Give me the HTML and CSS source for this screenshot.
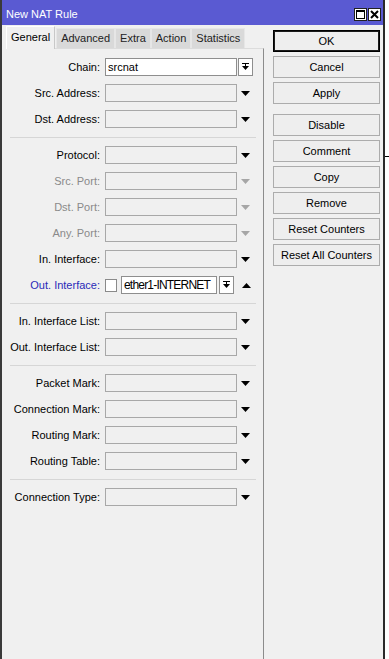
FILE: index.html
```html
<!DOCTYPE html>
<html lang="en">
<head>
  <meta charset="UTF-8" />
  <title>New NAT Rule</title>
  <link rel="stylesheet" href="styles.css">
</head>
<body>
<div class="screen">
  <div class="window">
    <div class="titlebar">
      <span class="title">New NAT Rule</span>
      <div class="title-btns">
        <span class="tbtn">
          <svg width="9" height="9" viewBox="0 0 9 9"><rect x="0.5" y="0.5" width="8" height="8" fill="none" stroke="#000"/><rect x="0" y="0" width="9" height="2" fill="#000"/></svg>
        </span>
        <span class="tbtn">
          <svg width="9" height="9" viewBox="0 0 9 9"><path d="M1 1 L8 8 M8 1 L1 8" stroke="#000" stroke-width="2"/></svg>
        </span>
      </div>
    </div>

    <div class="content">
      <div class="left">
        <div class="tabs">
          <div class="tab active">General</div>
          <div class="tab">Advanced</div>
          <div class="tab">Extra</div>
          <div class="tab">Action</div>
          <div class="tab">Statistics</div>
        </div>

        <div class="panel">
          <div class="row">
            <span class="label">Chain:</span>
            <span class="field white narrow">srcnat</span>
            <span class="dd-btn">
              <svg width="7" height="8" viewBox="0 0 7 8"><rect x="0" y="0" width="7" height="1" fill="#000"/><rect x="3" y="1" width="1" height="3" fill="#000"/><polygon points="0,3 7,3 3.5,7" fill="#000"/></svg>
            </span>
          </div>
          <div class="row">
            <span class="label">Src. Address:</span>
            <span class="field"></span>
            <span class="arrow"><svg width="9" height="5" viewBox="0 0 9 5"><polygon points="0,0 9,0 4.5,5" fill="#000"/></svg></span>
          </div>
          <div class="row">
            <span class="label">Dst. Address:</span>
            <span class="field"></span>
            <span class="arrow"><svg width="9" height="5" viewBox="0 0 9 5"><polygon points="0,0 9,0 4.5,5" fill="#000"/></svg></span>
          </div>

          <div class="sep"></div>

          <div class="row">
            <span class="label">Protocol:</span>
            <span class="field"></span>
            <span class="arrow"><svg width="9" height="5" viewBox="0 0 9 5"><polygon points="0,0 9,0 4.5,5" fill="#000"/></svg></span>
          </div>
          <div class="row">
            <span class="label disabled">Src. Port:</span>
            <span class="field"></span>
            <span class="arrow"><svg width="9" height="5" viewBox="0 0 9 5"><polygon points="0,0 9,0 4.5,5" fill="#a6a6a6"/></svg></span>
          </div>
          <div class="row">
            <span class="label disabled">Dst. Port:</span>
            <span class="field"></span>
            <span class="arrow"><svg width="9" height="5" viewBox="0 0 9 5"><polygon points="0,0 9,0 4.5,5" fill="#a6a6a6"/></svg></span>
          </div>
          <div class="row">
            <span class="label disabled">Any. Port:</span>
            <span class="field"></span>
            <span class="arrow"><svg width="9" height="5" viewBox="0 0 9 5"><polygon points="0,0 9,0 4.5,5" fill="#a6a6a6"/></svg></span>
          </div>
          <div class="row">
            <span class="label">In. Interface:</span>
            <span class="field"></span>
            <span class="arrow"><svg width="9" height="5" viewBox="0 0 9 5"><polygon points="0,0 9,0 4.5,5" fill="#000"/></svg></span>
          </div>
          <div class="row">
            <span class="label active-label">Out. Interface:</span>
            <span class="check"></span>
            <span class="field white short">ether1-INTERNET</span>
            <span class="dd-btn gap">
              <svg width="7" height="8" viewBox="0 0 7 8"><rect x="0" y="0" width="7" height="1" fill="#000"/><rect x="3" y="1" width="1" height="3" fill="#000"/><polygon points="0,3 7,3 3.5,7" fill="#000"/></svg>
            </span>
            <span class="arrow up"><svg width="9" height="5" viewBox="0 0 9 5"><polygon points="0,5 9,5 4.5,0" fill="#000"/></svg></span>
          </div>

          <div class="sep"></div>

          <div class="row">
            <span class="label">In. Interface List:</span>
            <span class="field"></span>
            <span class="arrow"><svg width="9" height="5" viewBox="0 0 9 5"><polygon points="0,0 9,0 4.5,5" fill="#000"/></svg></span>
          </div>
          <div class="row">
            <span class="label">Out. Interface List:</span>
            <span class="field"></span>
            <span class="arrow"><svg width="9" height="5" viewBox="0 0 9 5"><polygon points="0,0 9,0 4.5,5" fill="#000"/></svg></span>
          </div>

          <div class="sep"></div>

          <div class="row">
            <span class="label">Packet Mark:</span>
            <span class="field"></span>
            <span class="arrow"><svg width="9" height="5" viewBox="0 0 9 5"><polygon points="0,0 9,0 4.5,5" fill="#000"/></svg></span>
          </div>
          <div class="row">
            <span class="label">Connection Mark:</span>
            <span class="field"></span>
            <span class="arrow"><svg width="9" height="5" viewBox="0 0 9 5"><polygon points="0,0 9,0 4.5,5" fill="#000"/></svg></span>
          </div>
          <div class="row">
            <span class="label">Routing Mark:</span>
            <span class="field"></span>
            <span class="arrow"><svg width="9" height="5" viewBox="0 0 9 5"><polygon points="0,0 9,0 4.5,5" fill="#000"/></svg></span>
          </div>
          <div class="row">
            <span class="label">Routing Table:</span>
            <span class="field"></span>
            <span class="arrow"><svg width="9" height="5" viewBox="0 0 9 5"><polygon points="0,0 9,0 4.5,5" fill="#000"/></svg></span>
          </div>

          <div class="sep"></div>

          <div class="row">
            <span class="label">Connection Type:</span>
            <span class="field"></span>
            <span class="arrow"><svg width="9" height="5" viewBox="0 0 9 5"><polygon points="0,0 9,0 4.5,5" fill="#000"/></svg></span>
          </div>
        </div>
      </div>

      <div class="actions">
        <div class="btn default">OK</div>
        <div class="btn">Cancel</div>
        <div class="btn group-end">Apply</div>
        <div class="btn">Disable</div>
        <div class="btn">Comment</div>
        <div class="btn">Copy</div>
        <div class="btn">Remove</div>
        <div class="btn">Reset Counters</div>
        <div class="btn">Reset All Counters</div>
      </div>
    </div>
  </div>
  <div class="backdrop"></div>
</div>
</body>
</html>
```

FILE: styles.css
```css
* {
  box-sizing: border-box;
}

body {
  margin: 0;
  background: #fff;
  font-family: "Liberation Sans", Arial, sans-serif;
  font-size: 11px;
  color: #000;
}

.screen {
  display: flex;
  width: 389px;
  height: 659px;
  overflow: hidden;
}

.window {
  width: 385px;
  height: 659px;
  flex-shrink: 0;
  display: flex;
  flex-direction: column;
  background: #f0f0f0;
  border-left: 2px solid #3a3a3a;
  border-right: 2px solid #2a2a2a;
}

.backdrop {
  flex: 1;
  margin-top: 156px;
  height: 0;
  border-top: 1px solid #000;
}

/* title bar */
.titlebar {
  height: 25px;
  flex-shrink: 0;
  display: flex;
  align-items: center;
  justify-content: space-between;
  padding: 0 2px 0 4px;
  background: #5a5ad2;
  color: #fff;
}

.title {
  padding-top: 3px;
}

.title-btns {
  display: flex;
  gap: 1px;
  margin-top: 4px;
}

.tbtn {
  width: 13px;
  height: 13px;
  display: flex;
  align-items: center;
  justify-content: center;
  background: #fff;
  border: 1px solid #222;
}

/* body */
.content {
  flex: 1;
  display: flex;
}

.left {
  width: 262px;
  padding-left: 4px;
  display: flex;
  flex-direction: column;
}

.tabs {
  height: 23px;
  display: flex;
  align-items: flex-end;
}

.tab {
  height: 20px;
  line-height: 19px;
  padding: 0 4px;
  background: #d9d9d9;
  border: 1px solid #e6e6e6;
  border-bottom: none;
  color: #222;
}

.tab.active {
  height: 23px;
  line-height: 21px;
  background: #f0f0f0;
  border-color: #fff #c8c8c8 #f0f0f0 #fff;
  margin-right: 1px;
  margin-bottom: -1px;
  position: relative;
  z-index: 1;
  color: #000;
}

.panel {
  flex: 1;
  padding-top: 5px;
  border-top: 1px solid #dcdcdc;
  border-right: 1px solid #8c8c8c;
}

.row {
  height: 26px;
  display: flex;
  align-items: center;
}

.label {
  width: 94px;
  margin-right: 5px;
  text-align: right;
  white-space: nowrap;
}

.label.disabled {
  color: #8a8a8a;
}

.label.active-label {
  color: #2a2ab8;
}

.field {
  width: 132px;
  height: 18px;
  line-height: 16px;
  padding-left: 2px;
  border: 1px solid #a8a8a8;
  background: #f0f0f0;
  font-size: 11px;
  white-space: nowrap;
  overflow: hidden;
}

.field.white {
  background: #fff;
  border-color: #8e8e8e;
}

.field.narrow {
  width: 132px;
}

.field.short {
  width: 96px;
  font-size: 12px;
  letter-spacing: -0.8px;
}

.check {
  width: 12px;
  height: 13px;
  margin-right: 4px;
  background: #fff;
  border: 1px solid #8a8a8a;
}

.dd-btn {
  width: 15px;
  height: 18px;
  margin-left: 1px;
  display: flex;
  align-items: center;
  justify-content: center;
  background: #fff;
  border: 1px solid #8e8e8e;
}

.dd-btn.gap {
  margin-left: 2px;
}

.arrow {
  width: 17px;
  display: flex;
  justify-content: center;
}

.arrow svg {
  display: block;
}

.arrow.up {
  width: 9px;
  margin-left: 8px;
}

.sep {
  height: 1px;
  margin: 5px 7px 4px 4px;
  background: #d6d6d6;
}

/* side buttons */
.actions {
  padding: 5px 0 0 9px;
  display: flex;
  flex-direction: column;
}

.btn {
  width: 107px;
  height: 22px;
  line-height: 20px;
  margin-bottom: 4px;
  text-align: center;
  background: #eeeeee;
  border: 1px solid #acacac;
}

.btn.default {
  border-color: #000;
  box-shadow: inset 0 0 0 1px #1a1a1a;
}

.btn.group-end {
  margin-bottom: 10px;
}
```
